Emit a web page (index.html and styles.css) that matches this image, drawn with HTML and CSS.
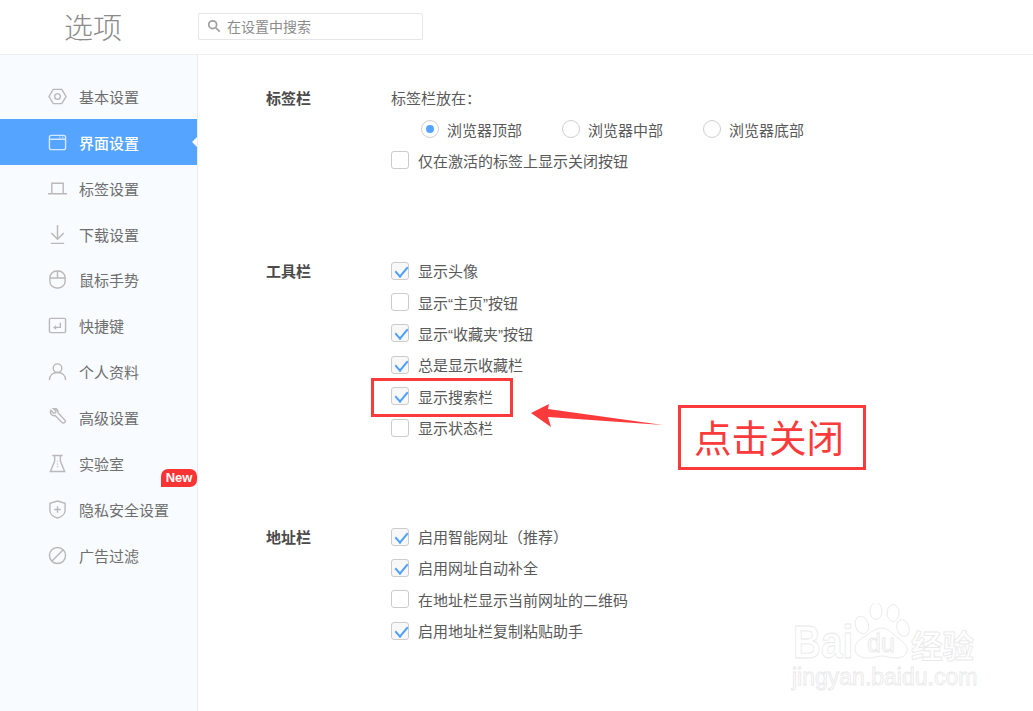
FILE: index.html
```html
<!DOCTYPE html>
<html lang="zh-CN">
<head>
<meta charset="utf-8">
<title>选项</title>
<link rel="stylesheet" href="styles.css">
</head>
<body>
<div class="app">
  <header class="topbar">
    <h1 class="title">选项</h1>
    <div class="search">
      <svg class="search-icon" viewBox="0 0 16 16"><circle cx="6.500" cy="6.500" r="4.500"/><path d="M10 10l4.500 4.500"/></svg>
      <span>在设置中搜索</span>
    </div>
  </header>
  <div class="body">
    <nav class="sidebar">
      <a class="nav-item"><svg class="nav-icon" viewBox="0 0 20 20"><path d="M5.500 2.500h9L19 10l-4.500 7.500h-9L1 10z"/><circle cx="10" cy="10" r="3"/></svg>基本设置</a>
      <a class="nav-item active"><svg class="nav-icon" viewBox="0 0 20 20"><rect x="1.500" y="2.500" width="17" height="15" rx="2"/><path d="M1.500 6.500h17M12 4.500h1M15 4.500h1"/></svg>界面设置</a>
      <a class="nav-item"><svg class="nav-icon" viewBox="0 0 20 20"><path d="M4 15V4.500h12V15M0 15.500h20"/></svg>标签设置</a>
      <a class="nav-item"><svg class="nav-icon" viewBox="0 0 20 20"><path d="M10 0v15M3.500 8.500L10 15l6.500-6.500M3 19.500h14"/></svg>下载设置</a>
      <a class="nav-item"><svg class="nav-icon" viewBox="0 0 20 20"><rect x="2" y="1" width="16" height="18" rx="7"/><path d="M2 8.500h16M10 1v7.500"/></svg>鼠标手势</a>
      <a class="nav-item"><svg class="nav-icon" viewBox="0 0 20 20"><rect x="1.500" y="2.500" width="17" height="15" rx="1.500"/><path d="M13 7v5H6.500M8.500 10.500L6.500 12l2 1.500"/></svg>快捷键</a>
      <a class="nav-item"><svg class="nav-icon" viewBox="0 0 20 20"><circle cx="10" cy="6.500" r="4.500"/><path d="M1.500 19c0-5 3.500-8 8.500-8s8.500 3 8.500 8"/></svg>个人资料</a>
      <a class="nav-item"><svg class="nav-icon" viewBox="0 0 20 20"><path d="M3 2.500l3 3 2-.5.500-2-3-2.500c3-.8 5.500 1.500 5 4.500l7.500 8c1 1.500-1.200 3.500-3 2.500l-7.500-7.500C4.500 9 1.500 6 3 2.500z"/></svg>高级设置</a>
      <a class="nav-item"><svg class="nav-icon" viewBox="0 0 20 20"><path d="M4.500 1.500h11M7 1.500v6L2.500 18.500h15L13 7.500v-6M10 7v1M10 10v1M10 13v1"/></svg>实验室</a>
      <a class="nav-item"><svg class="nav-icon" viewBox="0 0 20 20"><path d="M10 1l8 2.500V11c0 4-4 7-8 8-4-1-8-4-8-8V3.500z"/><path d="M10 6.500v7M6.500 10h7"/></svg>隐私安全设置</a>
      <a class="nav-item"><svg class="nav-icon" viewBox="0 0 20 20"><circle cx="10" cy="10" r="8.500"/><path d="M4 16L16 4"/></svg>广告过滤</a>
      <span class="badge">New</span>
    </nav>
    <main class="content">
      <section class="group">
        <h2 class="group-name">标签栏</h2>
        <div class="group-rows">
          <div class="row">标签栏放在：</div>
          <div class="row radios">
            <label class="radio-item"><i class="radio on"></i>浏览器顶部</label>
            <label class="radio-item"><i class="radio"></i>浏览器中部</label>
            <label class="radio-item"><i class="radio"></i>浏览器底部</label>
          </div>
          <label class="row"><i class="check"></i>仅在激活的标签上显示关闭按钮</label>
        </div>
      </section>
      <section class="group">
        <h2 class="group-name">工具栏</h2>
        <div class="group-rows">
          <label class="row"><i class="check on"></i>显示头像</label>
          <label class="row"><i class="check"></i><span>显示<span class="quote">“</span>主页<span class="quote">”</span>按钮</span></label>
          <label class="row"><i class="check on"></i><span>显示<span class="quote">“</span>收藏夹<span class="quote">”</span>按钮</span></label>
          <label class="row"><i class="check on"></i>总是显示收藏栏</label>
          <label class="row"><i class="check on"></i>显示搜索栏</label>
          <label class="row"><i class="check"></i>显示状态栏</label>
        </div>
      </section>
      <section class="group">
        <h2 class="group-name">地址栏</h2>
        <div class="group-rows">
          <label class="row"><i class="check on"></i>启用智能网址（推荐）</label>
          <label class="row"><i class="check on"></i>启用网址自动补全</label>
          <label class="row"><i class="check"></i>在地址栏显示当前网址的二维码</label>
          <label class="row"><i class="check on"></i>启用地址栏复制粘贴助手</label>
        </div>
      </section>
    </main>
  </div>
  <div class="mark-box"></div>
  <svg class="mark-arrow" viewBox="0 0 132 24"><path d="M0 9L18 0l-1 5 115 16-115-8 3 10z"/></svg>
  <div class="mark-note">点击关闭</div>
  <div class="watermark">
    <svg class="paw" viewBox="0 0 60 60">
      <ellipse cx="12" cy="22" rx="6.500" ry="9" transform="rotate(-20 12 22)"/>
      <ellipse cx="26" cy="8" rx="6" ry="8.500"/>
      <ellipse cx="43" cy="10" rx="6" ry="8.500"/>
      <ellipse cx="53" cy="25" rx="6" ry="8.500" transform="rotate(-20 53 25)"/>
      <path d="M32 25c7 0 10 6 16 10 7 5 10 9 9 13-1 5-5 7-12 7-5 0-8-2-13-2s-8 2-13 2c-7 0-13-2-14-8-1-5 2-9 9-13 6-4 11-9 18-9z"/>
    </svg>
    <span class="wm-bai">Bai</span>
    <span class="wm-du">du</span>
    <span class="wm-cn">经验</span>
    <span class="wm-url">jingyan.baidu.com</span>
  </div>
</div>
</body>
</html>
```
FILE: styles.css
```css
* { box-sizing: border-box; }
html, body { margin: 0; height: 100%; overflow: hidden; background: #fff; }
body { font-family: "Noto Sans CJK SC", "Liberation Sans", sans-serif; font-size: 15px; color: #595959; }
.app { position: relative; width: 1033px; height: 711px; display: flex; flex-direction: column; }

.topbar { height: 55px; flex: none; display: flex; align-items: center; border-bottom: 1px solid #eceef0; }
.title { width: 198px; margin: 0; padding-left: 64px; font-size: 29px; font-weight: 300; color: #8a8a8a; line-height: 53px; align-self: flex-start; }
.search { width: 225px; height: 27px; margin-bottom: 2px; display: flex; align-items: center; gap: 6px; padding-left: 8px; border: 1px solid #e6e6e6; border-radius: 2px; font-size: 14px; color: #8c8c8c; }
.search-icon { width: 14px; height: 14px; fill: none; stroke: #a0a0a0; stroke-width: 2; }

.body { flex: 1; display: flex; min-height: 0; }
.sidebar { position: relative; width: 198px; flex: none; padding-top: 18.400px; background: #f8fbff; border-right: 1px solid #e8ebf0; }
.nav-item { position: relative; height: 45.900px; display: flex; align-items: center; gap: 12px; padding-left: 48px; color: #6e6e6e; }
.nav-icon { width: 19px; height: 19px; flex: none; fill: none; stroke: #b9b9b9; stroke-width: 1.500; }
.nav-item.active { background: #55a4ff; color: #fff; font-weight: 500; }
.nav-item.active .nav-icon { stroke: #d4e8ff; }
.nav-item.active::after { content: ""; position: absolute; right: 0; top: 18px; border: 5px solid transparent; border-right-color: #fff; border-left-width: 0; }
.badge { position: absolute; left: 161px; top: 414px; width: 36px; height: 18px; background: #f93434; color: #fff; border-radius: 7px 7px 7px 0; font: bold 13px/18px "Liberation Sans", sans-serif; text-align: center; }

.content { flex: 1; padding: 27px 0 0 68px; display: flex; flex-direction: column; }
.group { display: flex; margin-top: 78.800px; }
.group:first-child { margin-top: 0; }
.group:last-child { margin-top: 77.600px; }
.group-name { width: 125px; margin: 0; font-size: 15px; font-weight: 700; color: #4a4a4a; line-height: 31.400px; }
.group-rows { display: flex; flex-direction: column; }
.row { height: 31.400px; display: flex; align-items: center; gap: 9px; white-space: nowrap; }
.quote { font-family: "Liberation Sans", sans-serif; }
.radios { padding-left: 30px; gap: 40px; }
.radio-item { display: flex; align-items: center; gap: 8px; }
.radio { width: 18px; height: 18px; border-radius: 50%; border: 1px solid #cfcfcf; background: #fff; display: block; position: relative; }
.radio.on::after { content: ""; position: absolute; left: 4px; top: 4px; width: 8px; height: 8px; border-radius: 50%; background: #55a4ff; }
.check { width: 18px; height: 18px; flex: none; border: 1px solid #cccccc; border-radius: 3px; background: #fff; display: block; position: relative; }
.check.on { background: #f8f8f8; }
.check.on::after { content: ""; position: absolute; left: 2.500px; top: 3px; width: 11px; height: 6px; border-left: 2.500px solid #4d9fff; border-bottom: 2.500px solid #4d9fff; transform: rotate(-50deg) skewX(-8deg); }

.mark-box { position: absolute; left: 371px; top: 378px; width: 142px; height: 39px; border: 3px solid #fb3b3b; }
.mark-arrow { position: absolute; left: 531px; top: 404px; width: 132px; height: 24px; fill: #fb3b3b; }
.mark-note { position: absolute; left: 678px; top: 405px; width: 188px; height: 65px; padding-right: 6px; border: 3px solid #fb3b3b; background: #fff; color: #fb3b3b; font-size: 37.500px; line-height: 55px; text-align: center; }

.watermark { position: absolute; left: 770px; top: 590px; width: 263px; height: 121px; }
.paw { position: absolute; left: 80px; top: 13px; width: 60px; height: 60px; fill: #fff; stroke: #ebebeb; stroke-width: 1; }
.wm-bai, .wm-du, .wm-cn, .wm-url { position: absolute; color: #fff; -webkit-text-stroke: .8px #e8e8e8; white-space: nowrap; }
.wm-bai { left: 23px; top: 29px; font: bold 46px/46px "Liberation Sans", sans-serif; transform: scaleX(.84); transform-origin: left center; }
.wm-du { left: 97px; top: 41px; font: 25px/25px "Liberation Sans", sans-serif; }
.wm-cn { left: 141px; top: 34px; font-size: 31.500px; line-height: 40px; font-weight: 700; }
.wm-url { left: 22px; top: 72px; font: 23px/30px "Liberation Sans", sans-serif; }
```
